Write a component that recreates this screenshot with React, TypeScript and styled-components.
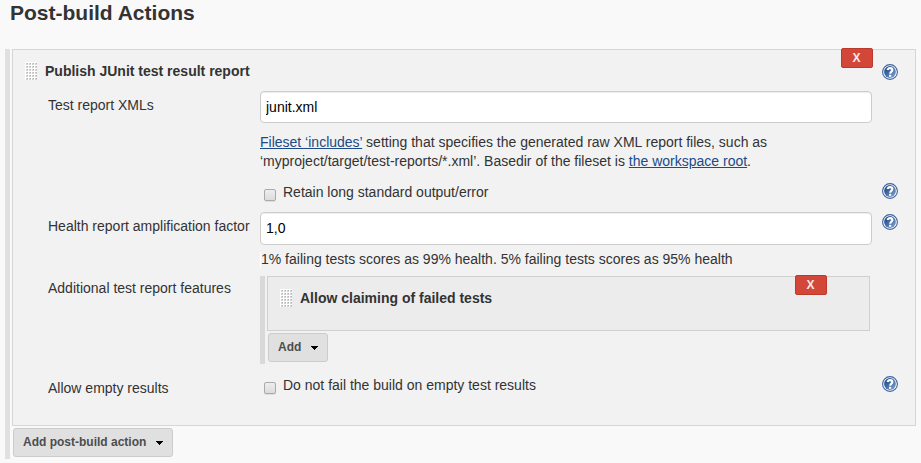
import React from "react";
import styled, { createGlobalStyle } from "styled-components";

const GlobalStyle = createGlobalStyle`
  * { box-sizing: border-box; }
  body {
    margin: 0;
    background: #f9f9f9;
    color: #333;
    font: 14px/19px "Liberation Sans", Arial, Helvetica, sans-serif;
    overflow: hidden;
  }
`;

const Page = styled.main`
  height: 463px;
  padding: 0 5px;
`;

const Title = styled.h2`
  margin: 0;
  height: 49px;
  padding-left: 5px;
  font-size: 21px;
  line-height: 26px;
  font-weight: bold;
  white-space: nowrap;
`;

const Chunks = styled.div<{ $nested?: boolean }>`
  display: flex;
  flex-direction: column;
  align-items: flex-start;
  width: ${(p) => (p.$nested ? 610 : 911)}px;
  height: ${(p) => (p.$nested ? 88 : 410)}px;
  padding-left: 2px;
  border-left: 5px solid ${(p) => (p.$nested ? "#d9d9d9" : "#e0e0e0")};
`;

const Panel = styled.section<{ $nested?: boolean }>`
  position: relative;
  width: 100%;
  height: ${(p) => (p.$nested ? 55 : 377)}px;
  margin-bottom: 2px;
  border: 1px solid ${(p) => (p.$nested ? "#d0d0d0" : "#d6d6d6")};
  background: ${(p) => (p.$nested ? "#ececec" : "#f2f2f2")};
`;

const PanelHead = styled.header`
  display: flex;
  align-items: flex-start;
  gap: 8px;
  height: 41px;
  padding: 12px 0 0 12px;
`;

const PanelName = styled.b`
  line-height: 19px;
  white-space: nowrap;
`;

const DeleteButton = styled.button`
  position: absolute;
  top: -2px;
  right: 42px;
  width: 32px;
  height: 20px;
  padding: 0 1px 0 0;
  border: 1px solid #bd392b;
  border-radius: 2px;
  background: #d34739;
  color: #f5e9e8;
  font: bold 12px/18px "Liberation Sans", Arial, sans-serif;
`;

const Row = styled.div<{ $height: number }>`
  display: grid;
  grid-template-columns: 212px 612px 26px;
  height: ${(p) => p.$height}px;
  padding-left: 35px;
  align-items: start;
`;

const Label = styled.div<{ $top: number }>`
  padding-top: ${(p) => p.$top}px;
  white-space: nowrap;
`;

const Field = styled.div<{ $top?: number }>`
  grid-column: 2;
  padding-top: ${(p) => p.$top ?? 0}px;
`;

const HelpCell = styled.div<{ $top?: number }>`
  grid-column: 3;
  padding: ${(p) => p.$top ?? 0}px 0 0 10px;
`;

const TextInput = styled.input<{ $height: number }>`
  display: block;
  width: 612px;
  height: ${(p) => p.$height}px;
  padding: 0 5px 1px;
  border: 1px solid #ccc;
  border-radius: 4px;
  background: #fff;
  box-shadow: inset 0 1px 1px rgba(0, 0, 0, 0.075);
  color: #000;
  font: 14px "Liberation Sans", Arial, sans-serif;
  outline: none;
`;

const Line = styled.div`
  white-space: nowrap;
`;

const Link = styled.a`
  color: #204a87;
  text-decoration: underline;
`;

const Note = styled.div`
  width: 612px;
  height: 16px;
  line-height: 14px;
  border-left: 1px solid #fff;
  white-space: nowrap;
`;

const CheckLabel = styled.label`
  display: flex;
  align-items: flex-start;
  gap: 7px;
  padding-left: 4px;
`;

const Checkbox = styled.input.attrs({ type: "checkbox" })`
  appearance: none;
  width: 12px;
  height: 12px;
  margin: 6px 0 0;
  border: 1px solid #aaa;
  border-radius: 2px;
  background: linear-gradient(#ededed, #dcdcdc);
  box-shadow: 0 1px 0 rgba(0, 0, 0, 0.08);
`;

const MenuButton = styled.button<{ $width: number }>`
  display: flex;
  align-items: center;
  justify-content: space-between;
  width: ${(p) => p.$width}px;
  height: 29px;
  margin-left: 1px;
  padding: 0 9px 1px;
  border: 1px solid #ccc;
  border-radius: 3px;
  background: #e0e0e0;
  color: #4d4d4d;
  font: bold 12px "Liberation Sans", Arial, sans-serif;
  white-space: nowrap;
`;

const Svg = styled.svg`
  display: block;
  flex: none;
`;

const Caret = () => (
  <Svg width="7" height="6" viewBox="0 0 7 6" shapeRendering="crispEdges">
    <path d="M0 2h7v1H6v1H5v1H4v1H3V5H2V4H1V3H0z" fill="#000" />
  </Svg>
);

const Grip = () => (
  <Svg width="12" height="18" viewBox="0 0 12 18" shapeRendering="crispEdges">
    <rect width="12" height="18" fill="#fff" />
    {Array.from({ length: 24 }, (_, i) => {
      const x = (i % 4) * 3 + 1;
      const y = Math.floor(i / 4) * 3 + 1;
      return (
        <g key={i}>
          <rect x={x} y={y} width="2" height="2" fill="#d2d2d2" />
          <rect x={x + 1} y={y} width="1" height="1" fill="#b4b4b4" />
        </g>
      );
    })}
  </Svg>
);

const Help = () => (
  <Svg width="16" height="16" viewBox="0 0 16 16">
    <defs>
      <linearGradient id="helpFill" x1="0" y1="0" x2="1" y2="1">
        <stop offset="0.2" stopColor="#24508f" />
        <stop offset="1" stopColor="#86a8d2" />
      </linearGradient>
    </defs>
    <circle cx="8" cy="8" r="7.4" fill="#fff" stroke="#3c619c" strokeWidth="1.1" />
    <circle cx="8" cy="8" r="5.9" fill="url(#helpFill)" />
    <path
      d="M5.7 6.1C5.7 3.4 10.4 3.5 10.4 6 10.4 7.7 8.2 7.6 8.2 9.8"
      fill="none"
      stroke="#fff"
      strokeWidth="2.1"
    />
    <rect x="7" y="10.8" width="2.2" height="2" fill="#fff" />
  </Svg>
);

const HeadHelp = styled.div`
  margin: 2px 0 0 auto;
  padding-right: 17px;
`;

export default function App() {
  return (
    <>
      <GlobalStyle />
      <Page>
        <Title>Post-build Actions</Title>
        <Chunks>
          <Panel>
            <DeleteButton>X</DeleteButton>
            <PanelHead>
              <Grip />
              <PanelName>Publish JUnit test result report</PanelName>
              <HeadHelp>
                <Help />
              </HeadHelp>
            </PanelHead>

            <Row $height={32}>
              <Label $top={5}>Test report XMLs</Label>
              <Field>
                <TextInput $height={32} defaultValue="junit.xml" />
              </Field>
            </Row>
            <Row $height={60}>
              <Field $top={10}>
                <Line>
                  <Link>Fileset ‘includes’</Link> setting that specifies the generated raw XML
                  report files, such as
                </Line>
                <Line>
                  ‘myproject/target/test-reports/*.xml’. Basedir of the fileset is{" "}
                  <Link>the workspace root</Link>.
                </Line>
              </Field>
            </Row>
            <Row $height={29}>
              <Field>
                <CheckLabel>
                  <Checkbox />
                  Retain long standard output/error
                </CheckLabel>
              </Field>
              <HelpCell>
                <Help />
              </HelpCell>
            </Row>
            <Row $height={33}>
              <Label $top={5}>Health report amplification factor</Label>
              <Field>
                <TextInput $height={33} defaultValue="1,0" />
              </Field>
              <HelpCell $top={2}>
                <Help />
              </HelpCell>
            </Row>
            <Row $height={31}>
              <Field $top={7}>
                <Note>1% failing tests scores as 99% health. 5% failing tests scores as 95% health</Note>
              </Field>
            </Row>
            <Row $height={100}>
              <Label $top={3}>Additional test report features</Label>
              <Field>
                <Chunks $nested>
                  <Panel $nested>
                    <DeleteButton>X</DeleteButton>
                    <PanelHead>
                      <Grip />
                      <PanelName>Allow claiming of failed tests</PanelName>
                    </PanelHead>
                  </Panel>
                  <MenuButton $width={60}>
                    Add
                    <Caret />
                  </MenuButton>
                </Chunks>
              </Field>
            </Row>
            <Row $height={49}>
              <Label $top={3}>Allow empty results</Label>
              <Field>
                <CheckLabel>
                  <Checkbox />
                  Do not fail the build on empty test results
                </CheckLabel>
              </Field>
              <HelpCell>
                <Help />
              </HelpCell>
            </Row>
          </Panel>
          <MenuButton $width={160}>
            Add post-build action
            <Caret />
          </MenuButton>
        </Chunks>
      </Page>
    </>
  );
}
